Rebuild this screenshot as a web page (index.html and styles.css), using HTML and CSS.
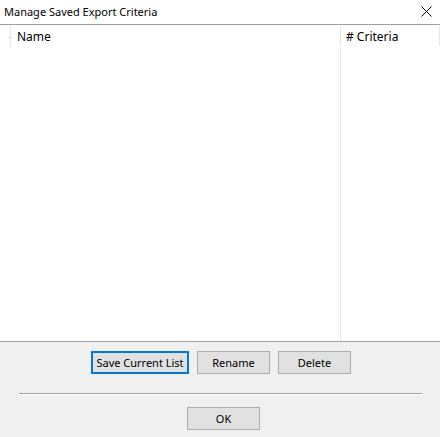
FILE: index.html
```html
<!DOCTYPE html>
<html lang="en">
<head>
    <meta charset="UTF-8">
    <meta name="viewport" content="width=device-width, initial-scale=1.0">
    <title>Manage Saved Export Criteria</title>
    <link rel="stylesheet" href="styles.css">
</head>
<body>
    <div class="dialog">
        <div class="titlebar">
            <span class="title">Manage Saved Export Criteria</span>
            <svg class="close" width="11" height="11" viewBox="0 0 11 11">
                <path d="M0.5 0.5 L10.5 10.5 M10.5 0.5 L0.5 10.5" stroke="#000" stroke-width="1" fill="none"/>
            </svg>
        </div>

        <div class="list">
            <div class="list-header">
                <div class="col col-stub"><span class="tick"></span></div>
                <div class="col col-name">Name</div>
                <div class="col col-count"># Criteria</div>
            </div>
            <div class="list-body">
                <div class="cell-name"></div>
                <div class="cell-count"></div>
            </div>
        </div>

        <div class="footer">
            <div class="actions">
                <button class="btn btn-default btn-wide">Save Current List</button>
                <button class="btn">Rename</button>
                <button class="btn">Delete</button>
            </div>
            <div class="divider"></div>
            <div class="confirm">
                <button class="btn">OK</button>
            </div>
        </div>
    </div>
</body>
</html>
```

FILE: styles.css
```css
body {
    margin: 0;
    font-family: "Noto Sans", "Open Sans", sans-serif;
    font-size: 11px;
    color: #000;
    background: #fff;
}
.dialog {
    width: 440px;
    height: 437px;
    display: flex;
    flex-direction: column;
    overflow: hidden;
}
.titlebar {
    height: 24px;
    border-bottom: 1px solid #a0a0a0;
    display: flex;
    align-items: center;
    justify-content: space-between;
    padding: 0 8px 0 4px;
    background: #fff;
}
.title {
    line-height: 22px;
    font-size: 11px;
}
.close {
    display: block;
    margin-top: -2px;
}
.list {
    height: 316px;
    display: flex;
    flex-direction: column;
    background: #fff;
}
.list-header {
    height: 23px;
    display: flex;
}
.col {
    line-height: 22px;
    border-right: 1px solid #e5e5e5;
    box-sizing: border-box;
    margin: 1px 0 2px;
    white-space: nowrap;
}
.col-stub {
    width: 11px;
    position: relative;
}
.tick {
    position: absolute;
    left: 9px;
    top: 11px;
    width: 1px;
    height: 1px;
    background: #b0b0b0;
}
.col-name {
    width: 330px;
    padding-left: 6px;
    font-size: 12px;
}
.col-count {
    width: 99px;
    padding-left: 5px;
    font-size: 12px;
}
.list-body {
    flex: 1;
    display: flex;
}
.cell-name {
    width: 340px;
    border-right: 1px dotted #d4d4d4;
}
.footer {
    flex: 1;
    background: #f0f0f0;
    border-top: 1px solid #a0a0a0;
    padding-top: 9px;
}
.actions {
    display: flex;
    justify-content: center;
    gap: 8px;
    padding-left: 2px;
}
.btn {
    width: 73px;
    height: 23px;
    padding: 0;
    font-family: inherit;
    font-size: 11px;
    color: #000;
    background: #e1e1e1;
    border: 1px solid #adadad;
    border-radius: 0;
    white-space: nowrap;
}
.btn-wide {
    width: 98px;
}
.btn-default {
    border: 2px solid #0078d7;
}
.divider {
    margin: 19px 18px 0 19px;
    height: 1px;
    background: #a0a0a0;
    border-bottom: 1px solid #fff;
}
.confirm {
    display: flex;
    justify-content: center;
    padding: 12px 0 0 7px;
}
```
